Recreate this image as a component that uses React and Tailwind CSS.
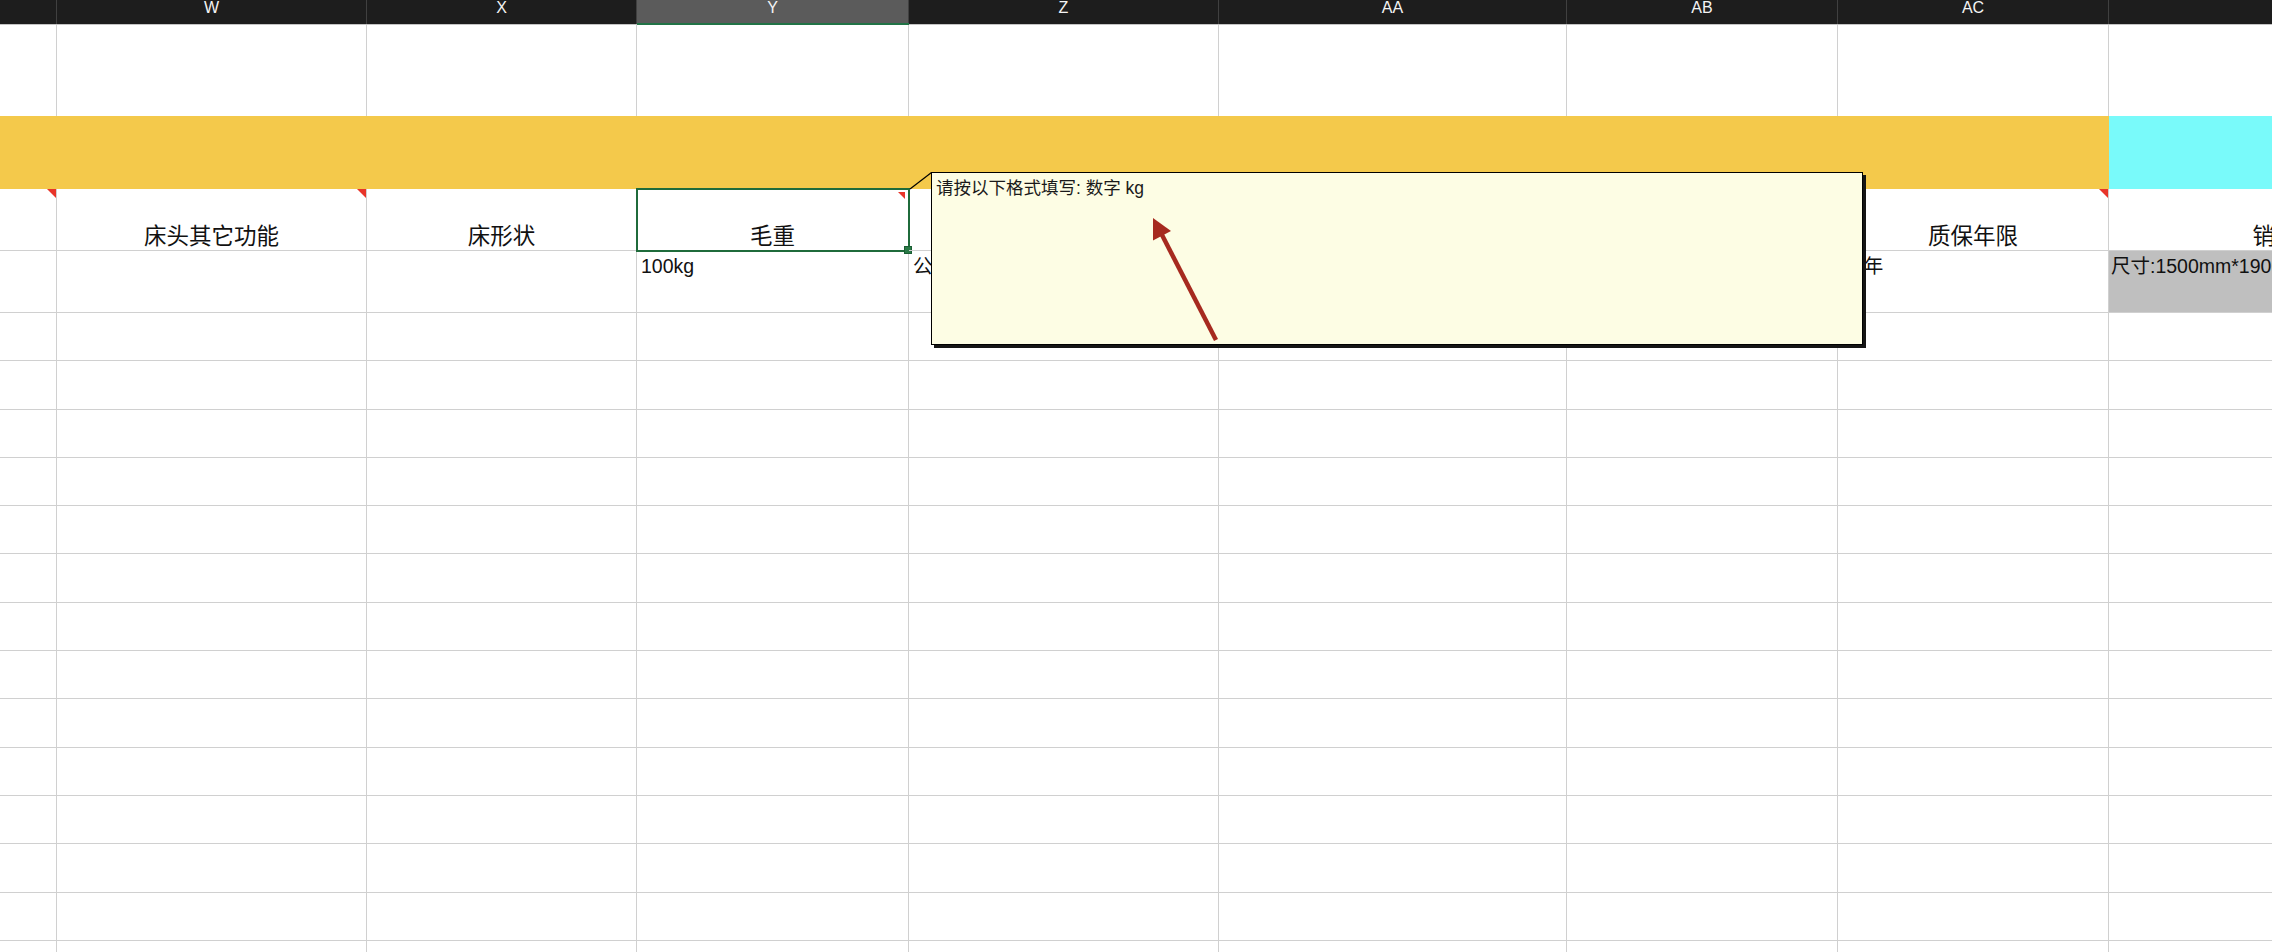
import React from "react";

const cols = [
  { key: "V", label: "", w: "w-[57px]" },
  { key: "W", label: "W", w: "w-[310px]" },
  { key: "X", label: "X", w: "w-[270px]" },
  { key: "Y", label: "Y", w: "w-[272px]" },
  { key: "Z", label: "Z", w: "w-[310px]" },
  { key: "AA", label: "AA", w: "w-[348px]" },
  { key: "AB", label: "AB", w: "w-[271px]" },
  { key: "AC", label: "AC", w: "w-[271px]" },
  { key: "AD", label: "", w: "w-[378px]" },
];

const headers = {
  W: "床头其它功能",
  X: "床形状",
  Y: "毛重",
  AC: "质保年限",
  AD: "销售属性",
};

const flagged = { V: true, W: true, Y: true, Z: true, AA: true, AB: true, AC: true };

const data = {
  Y: "100kg",
  Z: "公斤",
  AC: "10年",
  AD: "尺寸:1500mm*1900mm",
};

function Triangle({ inset }) {
  return (
    <div
      className={
        inset
          ? "absolute right-[3px] top-[3px] w-[7px] h-[7px] bg-[#e8352a] [clip-path:polygon(0_0,100%_0,100%_100%)]"
          : "absolute right-0 top-0 w-[9px] h-[9px] bg-[#e8352a] [clip-path:polygon(0_0,100%_0,100%_100%)]"
      }
    />
  );
}

export default function App() {
  const emptyRows = Array.from({ length: 14 }, (_, i) => i);
  return (
    <div className="relative w-[2272px] h-[952px] overflow-hidden bg-white font-['Liberation_Sans','Noto_Sans_CJK_SC',sans-serif] text-[#111]">
      {/* column header */}
      <div className="flex h-[25px] bg-[#1d1d1d] border-b border-[#c4c4c4]">
        {cols.map((c) => (
          <div
            key={c.key}
            className={`${c.w} shrink-0 relative border-r border-[#404040] ${
              c.key === "Y" ? "bg-[#5b5b5b]" : ""
            } flex justify-center text-[16px] leading-none text-[#f4f4f4]`}
          >
            {c.label}
            {c.key === "Y" && (
              <div className="absolute left-0 right-[-1px] bottom-[-1px] h-[2px] bg-[#217346]" />
            )}
          </div>
        ))}
      </div>

      {/* row 1 */}
      <div className="flex h-[91px]">
        {cols.map((c) => (
          <div key={c.key} className={`${c.w} shrink-0 border-r border-[#d0d0d0]`} />
        ))}
      </div>

      {/* yellow band */}
      <div className="flex h-[73px]">
        <div className="w-[2109px] shrink-0 bg-[#f4c94b]" />
        <div className="flex-1 bg-[#79fafa]" />
      </div>

      {/* row 3 headers */}
      <div className="flex h-[62px]">
        {cols.map((c) => (
          <div
            key={c.key}
            className={`${c.w} shrink-0 relative border-r border-b border-[#d0d0d0] flex items-end justify-center text-[22.5px] leading-[27px] whitespace-nowrap`}
          >
            {headers[c.key] || ""}
            {flagged[c.key] && <Triangle inset={c.key === "Y"} />}
            {c.key === "Y" && (
              <>
                <div className="absolute left-[-1px] top-[-1px] w-[274px] h-[64px] border-[2.5px] border-[#1f6b3b]" />
                <div className="absolute left-[267px] top-[57px] w-[8px] h-[8px] bg-[#2a7a47] border border-[#1b5e34]" />
              </>
            )}
          </div>
        ))}
      </div>

      {/* row 4 data */}
      <div className="flex h-[62px]">
        {cols.map((c) => (
          <div
            key={c.key}
            className={`${c.w} shrink-0 border-r border-b border-[#d0d0d0] text-[19.5px] leading-[24px] whitespace-nowrap ${
              c.key === "AD" ? "bg-[#bfbfbf] pl-[2px] pt-[3px]" : "pl-[4px] pt-[3px]"
            }`}
          >
            {data[c.key] || ""}
          </div>
        ))}
      </div>

      {/* empty rows */}
      {emptyRows.map((r) => (
        <div key={r} className="flex h-[48.3px]">
          {cols.map((c) => (
            <div key={c.key} className={`${c.w} shrink-0 border-r border-b border-[#d0d0d0]`} />
          ))}
        </div>
      ))}

      {/* comment box */}
      <div className="absolute left-[931px] top-[172px] w-[932px] h-[173px] border border-black bg-[#fdfde4] shadow-[3px_3px_0_#151515] pl-[4px] pt-[5px] text-[17.5px] leading-[20px] whitespace-nowrap text-[#1a1a1a]">
        请按以下格式填写: 数字 kg
      </div>

      {/* connector and arrow */}
      <svg
        className="absolute left-0 top-0 pointer-events-none"
        width="2272"
        height="952"
        viewBox="0 0 2272 952"
      >
        <line x1="910" y1="189" x2="931.5" y2="172.5" stroke="#000" strokeWidth="1.2" />
        <line x1="1216" y1="340" x2="1161" y2="233" stroke="#a62a1f" strokeWidth="4.5" />
        <polygon points="1153,218 1171,231 1153,240.5" fill="#a62a1f" />
      </svg>
    </div>
  );
}
